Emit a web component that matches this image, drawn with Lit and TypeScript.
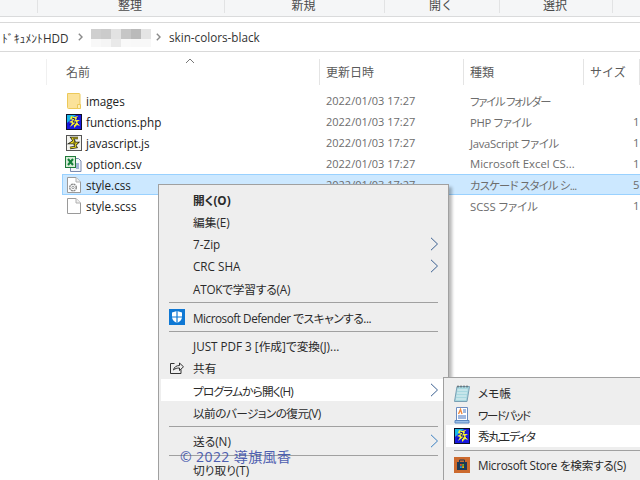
import { LitElement, html, css, svg } from "lit";
import { customElement } from "lit/decorators.js";

const hide = (s: number) => html`<svg width=${s} height=${s} viewBox="0 0 16 16">
  <rect x="0" y="0" width="16" height="16" fill="#101028"/>
  <rect x="1" y="1" width="14" height="14" fill="#1818e0"/>
  <path d="M1 1h9L1 9z" fill="#18b8e8"/>
  <path d="M12 2 8 3 5 2 4 5 7 6 3 8 6 9 4 13 8 10 8 14 11 11 14 12 11 8 14 6 10 6z" fill="#f4f030"/>
  <path d="M6 4 9 5 7 8 10 8 8 11M11 3 12 5M3 11 5 10M12 9 13 10" fill="none" stroke="#0c0c90" stroke-width="1"/>
</svg>`;

const folder = html`<svg width="14" height="16" viewBox="0 0 14 16">
  <path d="M.5.5h11.500a1 1 0 0 1 1 1V15.500H1.500a1 1 0 0 1-1-1z" fill="#fbe29a" stroke="#ecc95a"/>
  <path d="M10.500 15.500v-4h3v4z" fill="#fdeeb8" stroke="#ecc95a"/>
</svg>`;

const pageIcon = (inner: unknown = "") => html`<svg width="14" height="16" viewBox="0 0 14 16">
  <path d="M.5.500h8.500l4.500 4.500v10.500H.5z" fill="#fff" stroke="#9a9a9a"/>
  <path d="M9 .5v4.500h4.500" fill="#f0f0f0" stroke="#b0b0b0"/>
  ${inner}
</svg>`;

const gear = svg`<g fill="none" stroke="#8a8a8a">
  <circle cx="6" cy="10.500" r="3.300" stroke-width="1.400" stroke-dasharray="2 .6"/><circle cx="6" cy="10.500" r="1.200" stroke-width=".8"/></g>`;

const jsIcon = html`<svg width="16" height="16" viewBox="0 0 16 16">
  <rect x=".5" y=".5" width="15" height="15" fill="#f4f4ee" stroke="#555"/>
  <path d="M12 3 6 3l2 3-3 2h6l-2 2 1 2-6 1" fill="none" stroke="#1a1a1a" stroke-width="2.600"/>
  <path d="M12 3 6 3l2 3-3 2h6l-2 2 1 2-6 1" fill="none" stroke="#e8d820" stroke-width="1.100"/>
</svg>`;

const xlIcon = html`<svg width="17" height="16" viewBox="0 0 17 16">
  <path d="M5.500 2.500h8l2.500 2.500v10.500H5.500z" fill="#f4f7fb" stroke="#7a8bb0"/>
  <rect x="0.500" y=".5" width="10" height="11" fill="#d8ecd8" stroke="#1f7a3a"/>
  <path d="M3 3l5 6M8 3 3 9" stroke="#14803a" stroke-width="2"/>
  <path d="M11 8h3M11 10h3M11 12h3" stroke="#5070b0"/>
</svg>`;

const shield = html`<svg width="16" height="16" viewBox="0 0 16 16">
  <rect width="16" height="16" fill="#0f78d4"/>
  <path d="M8 2 13 3.500V8c0 3-2.500 5-5 6-2.500-1-5-3-5-6V3.500z" fill="#fff"/>
  <path d="M8 2v12M3 8h10" stroke="#0f78d4" stroke-width="1.200"/>
</svg>`;

const share = html`<svg width="16" height="16" viewBox="0 0 16 16" fill="none" stroke="#333" stroke-width="1">
  <path d="M5.500 3.500H1.500v10h10.500v-4"/>
  <path d="M4.500 10c.5-3 3-4.500 6-4.500V3l4 3.800-4 3.700V8c-2.500 0-4.500.5-6 2z"/>
</svg>`;

const notepad = html`<svg width="16" height="18" viewBox="0 0 16 18">
  <path d="M3 1.500h12.500L13 16.500H.5z" fill="#a8d8e0" stroke="#7aa0b4"/>
  <path d="M3.500 5h10M3 8h10M2.500 11h10M2 14h10" stroke="#e4f2f4"/>
  <path d="M4 .5v2M7 .5v2M10 .5v2M13 .5v2" stroke="#555"/>
</svg>`;

const wordpad = html`<svg width="16" height="18" viewBox="0 0 16 18">
  <path d="M2.500 1.500h11v13h-11z" fill="#fff" stroke="#6b8cc0"/>
  <path d="M1 14.500h14v2.500H1z" fill="#9cc0e8" stroke="#5a86c0"/>
  <path d="M4.500 8 6.500 3.500 8 8" fill="none" stroke="#f08a40" stroke-width="1.400"/>
  <path d="M9 4h3M9 6h3M4 10h8M4 12h8" stroke="#4070c0"/>
</svg>`;

const store = html`<svg width="16" height="16" viewBox="0 0 16 16">
  <rect width="16" height="16" fill="#cc6a2e"/>
  <path d="M3 5h10v8H3z" fill="#1f3a55"/>
  <path d="M5.500 5V3h5v2" fill="none" stroke="#1f3a55"/>
  <rect x="6" y="7" width="1.800" height="1.800" fill="#e8502a"/>
  <rect x="8.200" y="7" width="1.800" height="1.800" fill="#74b82a"/>
  <rect x="6" y="9.200" width="1.800" height="1.800" fill="#1a9ae0"/>
  <rect x="8.200" y="9.200" width="1.800" height="1.800" fill="#f4b400"/>
</svg>`;

const chev = (c = "#3a3a3a") => html`<svg class="chev" width="9" height="14" viewBox="0 0 9 14" fill="none" stroke=${c}><path d="M1 .8 7.500 7 1 13.200"/></svg>`;
const crumb = html`<svg width="5" height="8" viewBox="0 0 5 8" fill="none" stroke="#8a8a8a" stroke-width="1.400"><path d="M.8.8 4 4 .8 7.200"/></svg>`;

const mosaic = [
  "#cfcfcf", "#cbcbcb", "#e2e2e2", "#c6c6c6", "#bababa", "#e4e4e4",
  "#f8f8f8", "#f5f5f5", "#e9e9e9", "#f9f9f9", "#f8f8f8", "#f8f8f8",
];

const files = [
  { icon: folder, name: "images", type: "ファイル フォルダー", size: "", ls: -1.2 },
  { icon: hide(16), name: "functions.php", type: "PHP ファイル", size: "1", ls: -0.3 },
  { icon: jsIcon, name: "javascript.js", type: "JavaScript ファイル", size: "1", ls: -0.3 },
  { icon: xlIcon, name: "option.csv", type: "Microsoft Excel CS...", size: "1", ls: 0 },
  { icon: pageIcon(gear), name: "style.css", type: "カスケード スタイル シ...", size: "5", sel: true, ls: -0.7 },
  { icon: pageIcon(), name: "style.scss", type: "SCSS ファイル", size: "1", ls: 0 },
];

const menu: any[] = [
  { t: "開く(O)", bold: true },
  { t: "編集(E)" },
  { t: "7-Zip", sub: true },
  { t: "CRC SHA", sub: true },
  { t: "ATOKで学習する(A)", ls: -0.2 },
  { sep: true },
  { t: "Microsoft Defender でスキャンする...", icon: shield, ls: -0.45 },
  { sep: true },
  { t: "JUST PDF 3 [作成]で変換(J)..." },
  { t: "共有", icon: share },
  { t: "プログラムから開く(H)", sub: true, hot: true, ls: -0.85 },
  { t: "以前のバージョンの復元(V)", ls: -0.6 },
  { sep: true },
  { t: "送る(N)", sub: true, blue: true },
  { sep: true },
  { t: "切り取り(T)" },
];

const submenu: any[] = [
  { t: "メモ帳", icon: notepad },
  { t: "ワードパッド", icon: wordpad, ls: -1.5 },
  { t: "秀丸エディタ", icon: hide(16), hot: true, ls: -1.2 },
  { sep: true },
  { t: "Microsoft Store を検索する(S)", icon: store, ls: -0.3 },
];

@customElement("app-root")
export class AppRoot extends LitElement {
  static styles = css`
    :host {
      display: block;
      position: relative;
      width: 640px;
      height: 480px;
      overflow: hidden;
      background: #fff;
      font-family: "Open Sans", "Noto Sans CJK JP", sans-serif;
      font-size: 11.7px;
      font-feature-settings: "palt";
      color: #1f1f1f;
    }
    .ribbon {
      height: 16px;
      background: #f5f6f7;
      border-bottom: 1px solid #dadbdc;
      display: grid;
      grid-template-columns: 38px 187px 160px 115px 113px 1fr;
      overflow: hidden;
    }
    .tab {
      border-right: 1px solid #e2e3e4;
      height: 13px;
      display: flex;
      justify-content: center;
      padding-right: 2px;
      font: 12px/1 "Noto Sans CJK JP", sans-serif;
      font-feature-settings: normal;
      color: #4a4a4a;
    }
    .tab span {
      margin-top: -1px;
    }
    .gap {
      height: 5px;
    }
    .address {
      height: 28px;
      border-top: 1px solid #d9d9d9;
      border-bottom: 1px solid #d9d9d9;
      display: flex;
      align-items: center;
      color: #333;
    }
    .address .doc {
      margin-left: 2px;
      width: 70px;
      white-space: nowrap;
      font-family: "Open Sans", "Noto Sans CJK JP", sans-serif;
      font-feature-settings: normal;
    }
    .address .c1 {
      margin: 0 8px 0 6px;
      display: flex;
    }
    .mosaic {
      display: grid;
      grid-template-columns: repeat(6, 10px);
      grid-auto-rows: 10px 8px;
      width: 60px;
      margin-top: 2px;
    }
    .mosaic i {
      display: block;
    }
    .address .c2 {
      margin-left: 5px;
      display: flex;
    }
    .address .cur {
      margin-left: 8px;
    }
    .head {
      position: relative;
      height: 26px;
      margin-top: 7px;
      display: grid;
      grid-template-columns: 320px 144px 120px 1fr;
      color: #5a5a5a;
      font: 12px/26px "Noto Sans CJK JP", sans-serif;
      font-feature-settings: normal;
    }
    .head > div {
      border-right: 1px solid #e4e4e4;
      padding-left: 6px;
      box-sizing: border-box;
      white-space: nowrap;
    }
    .head > div:last-child {
      border-right: 0;
    }
    .head .name {
      padding-left: 66px;
      position: relative;
    }
    .head .name::before {
      content: "";
      position: absolute;
      left: 46px;
      top: 0;
      bottom: 0;
      border-left: 1px solid #f0f0f0;
    }
    .sort {
      position: absolute;
      left: 185px;
      top: -1px;
    }
    .list {
      margin-top: 5px;
      display: flex;
      flex-direction: column;
    }
    .row {
      height: 21px;
      box-sizing: border-box;
      margin-left: 62px;
      display: grid;
      grid-template-columns: 263px 144px 163px 1fr;
      align-items: center;
      border: 1px solid transparent;
      border-right: 0;
      white-space: nowrap;
    }
    .row.sel {
      background: #cce8ff;
      border-color: #99d1ff;
    }
    .fname {
      display: flex;
      align-items: center;
      color: #222;
    }
    .ficon {
      width: 17px;
      margin: 0 4px 0 2px;
      display: flex;
      justify-content: center;
      align-items: center;
      height: 17px;
    }
    .date,
    .type,
    .size {
      color: #6d6d6d;
      font-size: 11.3px;
    }
    .date {
      font-size: 11px;
    }
    .menu {
      position: absolute;
      background: #eeeeee;
      border: 1px solid #a0a0a0;
      box-shadow: 3px 3px 3px rgba(0, 0, 0, 0.28);
      box-sizing: border-box;
      padding: 3.500px 2px 3px;
      color: #2a2a2a;
    }
    .main {
      left: 158px;
      top: 184px;
      width: 291px;
      height: 320px;
    }
    .second {
      left: 443px;
      top: 377px;
      width: 220px;
      height: 120px;
    }
    .item {
      height: 22.2px;
      display: flex;
      align-items: center;
      position: relative;
      padding-left: 32px;
      white-space: nowrap;
    }
    .item.hot {
      background: #fff;
    }
    .item.bold {
      font-weight: 700;
    }
    .item .ic {
      position: absolute;
      left: 8px;
      top: 3px;
      display: flex;
    }
    .item .chev {
      position: absolute;
      right: 7px;
      top: 4px;
    }
    .sep {
      height: 1px;
      background: #a0a0a0;
      margin: 3px 0 2.500px 8px;
      width: 269px;
    }
    .second .sep {
      width: 190px;
      margin: 3px 0 3px 8px;
    }
    .second .item {
      height: 21.8px;
    }
    .mark {
      position: absolute;
      left: 180px;
      top: 447px;
      font: 14px/20px "Open Sans", "Noto Sans CJK JP", sans-serif;
      color: #3c50aa;
      opacity: 0.9;
      letter-spacing: 0.4px;
      white-space: nowrap;
    }
  `;

  private renderMenu(items: any[], cls: string) {
    return html`<div class="menu ${cls}">
      ${items.map((m) =>
        m.sep
          ? html`<div class="sep"></div>`
          : html`<div class="item ${m.hot ? "hot" : ""} ${m.bold ? "bold" : ""}">
              ${m.icon ? html`<span class="ic">${m.icon}</span>` : ""}
              <span style="letter-spacing:${m.ls ?? 0}px">${m.t}</span>
              ${m.sub ? chev(m.blue ? "#3a7fc0" : "#3a5f90") : ""}
            </div>`
      )}
    </div>`;
  }

  render() {
    return html`
      <div class="ribbon">
        <div class="tab"></div>
        <div class="tab"><span>整理</span></div>
        <div class="tab"><span>新規</span></div>
        <div class="tab"><span>開く</span></div>
        <div class="tab"><span>選択</span></div>
        <div></div>
      </div>
      <div class="gap"></div>
      <div class="address">
        <span class="doc">ﾄﾞｷｭﾒﾝﾄHDD</span>
        <span class="c1">${crumb}</span>
        <div class="mosaic">
          ${mosaic.map((c) => html`<i style="background:${c}"></i>`)}
        </div>
        <span class="c2">${crumb}</span>
        <span class="cur">skin-colors-black</span>
      </div>
      <div class="head">
        <div class="name">名前</div>
        <div>更新日時</div>
        <div>種類</div>
        <div>サイズ</div>
        <svg class="sort" width="10" height="6" viewBox="0 0 10 6" fill="none" stroke="#777"><path d="M1 5 5 1l4 4"/></svg>
      </div>
      <div class="list">
        ${files.map(
          (f) => html`<div class="row ${f.sel ? "sel" : ""}">
            <div class="fname"><span class="ficon">${f.icon}</span><span>${f.name}</span></div>
            <div class="date">2022/01/03 17:27</div>
            <div class="type" style="letter-spacing:${f.ls}px">${f.type}</div>
            <div class="size">${f.size}</div>
          </div>`
        )}
      </div>
      ${this.renderMenu(menu, "main")} ${this.renderMenu(submenu, "second")}
      <div class="mark">© 2022 導旗風香</div>
    `;
  }
}
